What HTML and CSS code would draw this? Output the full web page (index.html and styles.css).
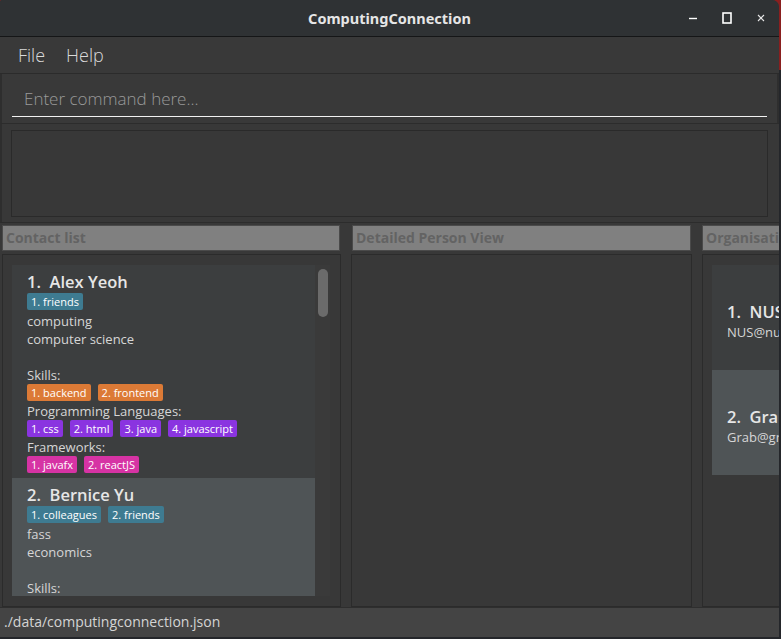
FILE: index.html
```html
<!DOCTYPE html>
<html lang="en">
<head>
<meta charset="utf-8">
<title>ComputingConnection</title>
<link rel="stylesheet" href="styles.css">
</head>
<body>
<div class="desktop">
  <div class="window">
    <header class="titlebar">
      <span class="title">ComputingConnection</span>
      <div class="controls">
        <svg class="ctl" width="12" height="12" viewBox="0 0 12 12"><path d="M2 6.5h8" stroke="#ffffff" stroke-width="1.4"/></svg>
        <svg class="ctl" width="12" height="12" viewBox="0 0 12 12"><rect x="2" y="1" width="8" height="10" fill="none" stroke="#ffffff" stroke-width="1.6"/></svg>
        <svg class="ctl" width="12" height="12" viewBox="0 0 12 12"><path d="M3 3l6 6M9 3l-6 6" stroke="#e8e8e8" stroke-width="1.1"/></svg>
      </div>
    </header>
    <nav class="menubar"><span>File</span><span>Help</span></nav>
    <div class="command"><div class="cmd-field">Enter command here...</div></div>
    <div class="result"><div class="result-box"></div></div>
    <main class="panes">
      <section class="pane pane-contacts">
        <div class="pane-header">Contact list</div>
        <div class="pane-body contacts-body">
          <div class="list">
            <article class="card even">
              <div class="name">1.&nbsp;&nbsp;Alex Yeoh</div>
              <div class="tags"><span class="tag t-tag">1. friends</span></div>
              <div class="line">computing</div>
              <div class="line">computer science</div>
              <div class="line">&nbsp;</div>
              <div class="line">Skills:</div>
              <div class="tags"><span class="tag t-skill">1. backend</span><span class="tag t-skill">2. frontend</span></div>
              <div class="line">Programming Languages:</div>
              <div class="tags"><span class="tag t-lang">1. css</span><span class="tag t-lang">2. html</span><span class="tag t-lang">3. java</span><span class="tag t-lang">4. javascript</span></div>
              <div class="line">Frameworks:</div>
              <div class="tags"><span class="tag t-fw">1. javafx</span><span class="tag t-fw">2. reactJS</span></div>
            </article>
            <article class="card odd">
              <div class="name">2.&nbsp;&nbsp;Bernice Yu</div>
              <div class="tags"><span class="tag t-tag">1. colleagues</span><span class="tag t-tag">2. friends</span></div>
              <div class="line">fass</div>
              <div class="line">economics</div>
              <div class="line">&nbsp;</div>
              <div class="line">Skills:</div>
              <div class="tags"><span class="tag t-skill">1. backend</span></div>
            </article>
          </div>
          <div class="scrollbar"><div class="thumb"></div></div>
        </div>
      </section>
      <section class="pane pane-detail">
        <div class="pane-header">Detailed Person View</div>
        <div class="pane-body"></div>
      </section>
      <section class="pane pane-org">
        <div class="pane-header">Organisations</div>
        <div class="pane-body org-body">
          <article class="org-card even">
            <div class="name">1.&nbsp;&nbsp;NUS</div>
            <div class="line">NUS@nus.edu.sg</div>
          </article>
          <article class="org-card odd">
            <div class="name">2.&nbsp;&nbsp;Grab</div>
            <div class="line">Grab@grab.com</div>
          </article>
        </div>
      </section>
    </main>
    <footer class="status">./data/computingconnection.json</footer>
  </div>
</div>
</body>
</html>
```
FILE: styles.css
```css
html, body {
  margin: 0;
  padding: 0;
}
body {
  width: 781px;
  height: 639px;
  overflow: hidden;
  background: #1f2023;
  font-family: "Open Sans", "Noto Sans", sans-serif;
}
.desktop {
  width: 781px;
  height: 639px;
  background: linear-gradient(to bottom, #8a1f1f 0, #8a1f1f 70px, #24262a 70px);
}
.window {
  width: 779px;
  height: 637px;
  display: flex;
  flex-direction: column;
  background: #383838;
  border-top-right-radius: 7px;
  border-top-left-radius: 2px;
  overflow: hidden;
}
.titlebar {
  height: 36px;
  flex: none;
  background: #2f3234;
  border-bottom: 1px solid #151617;
  position: relative;
  display: flex;
  align-items: center;
  justify-content: center;
}
.title {
  font-family: "Noto Sans", "Open Sans", sans-serif;
  font-weight: 700;
  font-size: 14.5px;
  color: #e6e6e6;
}
.controls {
  position: absolute;
  right: 12px;
  top: 12px;
  display: flex;
  gap: 22px;
}
.ctl { display: block; }
.menubar {
  height: 36px;
  flex: none;
  background: #393939;
  border-bottom: 1px solid #2b2b2b;
  display: flex;
  align-items: center;
  padding-left: 18px;
  gap: 21px;
  font-size: 18px;
  font-weight: 300;
  color: #dadada;
}
.command {
  height: 49px;
  flex: none;
  background: #393939;
  padding: 0 10px;
  border-left: 2px solid #2e2e2e;
  border-right: 2px solid #2e2e2e;
  box-sizing: border-box;
}
.cmd-field {
  height: 43px;
  box-sizing: border-box;
  border-bottom: 1.5px solid #f2f2f2;
  padding-left: 12px;
  padding-top: 13px;
  font-size: 17px;
  font-weight: 300;
  color: #9a9a9a;
}
.result {
  height: 100px;
  flex: none;
  box-sizing: border-box;
  border-top: 1px solid #2c2c2c;
  border-bottom: 1px solid #2c2c2c;
  border-left: 2px solid #2e2e2e;
  padding: 6px 11px 5px 9px;
  background: #383838;
}
.result-box {
  height: 100%;
  box-sizing: border-box;
  border: 1px solid #2a2a2a;
  background: #383838;
}
.panes {
  flex: 1;
  min-height: 0;
  display: flex;
  gap: 10px;
  padding: 2px 0 0 2px;
  overflow: hidden;
}
.pane {
  width: 339px;
  flex: none;
  display: flex;
  flex-direction: column;
  min-height: 0;
}
.pane-detail { width: 341px; }
.pane-header {
  flex: none;
  height: 26px;
  box-sizing: border-box;
  background: #808080;
  border: 1px solid #4a4a4a;
  font-weight: 700;
  font-size: 14px;
  color: #636363;
  padding-left: 3px;
  line-height: 23px;
  white-space: nowrap;
  overflow: hidden;
}
.pane-contacts .pane-header { margin-right: 1px; }
.pane-detail .pane-header { margin: 0 1px; }
.pane-body {
  flex: 1;
  min-height: 0;
  overflow: hidden;
  margin-top: 3px;
  box-sizing: border-box;
  border: 1px solid #2b2b2b;
  background: #383838;
}
.contacts-body {
  display: flex;
  padding: 10px 10px 10px 9px;
}
.list {
  width: 303px;
  overflow: hidden;
  background: #3a3a3a;
}
.scrollbar {
  flex: 1;
  padding: 4px 2px 0 3px;
  background: #3a3a3a;
}
.thumb {
  height: 48px;
  border-radius: 5px;
  background: #6b6b6b;
}
.card {
  padding: 6px 10px 4px 15px;
}
.even { background: #3c3e3f; }
.odd { background: #4f5456; }
.name {
  font-size: 16.5px;
  font-weight: 600;
  color: #e6e6e6;
  line-height: 21px;
  white-space: nowrap;
}
.line {
  font-size: 13px;
  color: #d6d6d6;
  line-height: 18px;
  white-space: nowrap;
}
.tags {
  display: flex;
  gap: 7px;
  height: 18px;
}
.tag {
  height: 17px;
  padding: 0 4px;
  border-radius: 2px;
  font-size: 11px;
  line-height: 17px;
  color: #ffffff;
  white-space: nowrap;
}
.card .name + .tags { margin: 1px 0 1px; }
.t-tag { background: #3e7b91; }
.t-skill { background: #dc7a36; }
.t-lang { background: #8a34e0; }
.t-fw { background: #d633a4; }
.org-body {
  padding: 10px 0 0 9px;
}
.org-card {
  height: 105px;
  width: 303px;
  box-sizing: border-box;
  padding: 36px 0 0 15px;
}
.org-card .name { line-height: 22px; }
.org-card .line { line-height: 19px; }
.status {
  height: 30px;
  flex: none;
  box-sizing: border-box;
  background: #444444;
  border-top: 1px solid #2e2e2e;
  padding-left: 4px;
  font-size: 14px;
  line-height: 28px;
  color: #d4d4d4;
}
```
